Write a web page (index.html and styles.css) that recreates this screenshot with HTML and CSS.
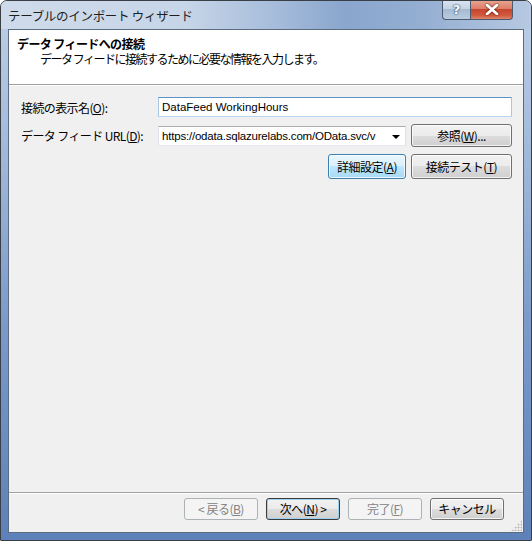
FILE: index.html
```html
<!DOCTYPE html>
<html lang="ja">
<head>
<meta charset="utf-8">
<title>テーブルのインポート ウィザード</title>
<link rel="stylesheet" href="styles.css">
</head>
<body>
<div class="window">
  <div class="titlebar">
    <span class="title">テーブルのインポート ウィザード</span>
    <div class="caption-btns">
      <div class="cb help"><span>?</span></div>
      <div class="cb close">
        <svg width="14" height="11" viewBox="0 0 14 11"><path d="M2 1 L12 10 M12 1 L2 10" stroke="#fff" stroke-width="2.6" stroke-linecap="round"/><path d="M2 1 L12 10 M12 1 L2 10" stroke="#fff" stroke-width="1.8" stroke-linecap="round"/></svg>
      </div>
    </div>
  </div>
  <div class="client">
    <div class="header">
      <div class="h-title">データ フィードへの接続</div>
      <div class="h-sub">データ フィードに接続するために必要な情報を入力します。</div>
    </div>
    <div class="content">
      <div class="row row1">
        <label class="lbl">接続の表示名(<u>O</u>):</label>
        <div class="input focus">DataFeed WorkingHours</div>
      </div>
      <div class="row row2">
        <label class="lbl">データ フィード URL(<u>D</u>):</label>
        <div class="combo"><span class="combo-text">https://odata.sqlazurelabs.com/OData.svc/v</span><span class="arrow"></span></div>
        <button class="btn wide">参照(<u>W</u>)...</button>
      </div>
      <div class="row row3">
        <button class="btn hot adv">詳細設定(<u>A</u>)</button>
        <button class="btn wide">接続テスト(<u>T</u>)</button>
      </div>
    </div>
    <div class="footer">
      <button class="btn nav disabled">&lt; 戻る(<u>B</u>)</button>
      <button class="btn nav default">次へ(<u>N</u>) &gt;</button>
      <button class="btn nav disabled">完了(<u>F</u>)</button>
      <button class="btn nav">キャンセル</button>
      <div class="grip"></div>
    </div>
  </div>
</div>
</body>
</html>
```

FILE: styles.css
```css
* { box-sizing: border-box; }
html, body { margin: 0; padding: 0; }
body {
  width: 532px;
  height: 541px;
  background: #ffffff;
  font-family: "Noto Sans CJK JP", "Liberation Sans", sans-serif;
  font-size: 12px;
  color: #000;
}
.window {
  width: 532px;
  height: 541px;
  border: 1px solid #3a3f46;
  border-radius: 7px 7px 1px 1px;
  background: linear-gradient(to bottom, #c3d4e9 0%, #b9cce5 5%, #9fb7d8 30%, #7b9aca 60%, #5d81b8 100%);
  display: flex;
  flex-direction: column;
  padding: 0 7px 7px 7px;
  position: relative;
  overflow: hidden;
}
.titlebar {
  height: 28px;
  display: flex;
  align-items: flex-start;
  justify-content: space-between;
  margin: 0 -7px;
  padding: 0 18px 0 7px;
  background: linear-gradient(to right, #cfdbea 0%, #c6d5e8 35%, #a9bfdc 50%, #8aa6cd 65%, #95afd3 80%, #b7c9e1 100%);
}
.title {
  margin-top: 5px;
  font-size: 12.5px;
  color: #1e1e1e;
  letter-spacing: -0.3px;
}
.caption-btns {
  display: flex;
  height: 20px;
  margin-top: -1px;
}
.cb {
  height: 20px;
  border: 1px solid #4c5a6e;
  border-top: none;
  display: flex;
  align-items: center;
  justify-content: center;
}
.help {
  width: 28px;
  border-radius: 0 0 0 4px;
  border-right: none;
  background: linear-gradient(to bottom, #dbe5f1 0%, #c4d3e5 45%, #a6bad3 50%, #b8cbe0 100%);
}
.help span {
  font-family: "DejaVu Sans", sans-serif;
  font-weight: bold;
  font-size: 13px;
  color: #fff;
  text-shadow: 0 0 2px #233a5a, 0 0 1px #233a5a;
}
.close {
  width: 43px;
  border-radius: 0 0 4px 0;
  background: linear-gradient(to bottom, #e9a793 0%, #dc7f69 45%, #c7462f 50%, #d1583d 80%, #e0866b 100%);
}
.close svg { filter: drop-shadow(0 0 1px #4d1206); }
.client {
  flex: 1;
  background: #f0f0f0;
  border: 1px solid #5b6b80;
  display: flex;
  flex-direction: column;
}
.header {
  height: 55px;
  background: #fff;
  border-bottom: 1px solid #a0a0a0;
  box-shadow: 0 1px 0 #ffffff;
  padding: 6px 0 0 8px;
}
.h-title {
  font-weight: bold;
  font-size: 12px;
  line-height: 15px;
  letter-spacing: -0.6px;
}
.h-sub {
  padding-left: 23px;
  font-size: 12px;
  line-height: 15px;
  letter-spacing: -1.5px;
}
.content {
  flex: 1;
  padding: 12px 11px 0 12px;
  display: flex;
  flex-direction: column;
  gap: 7px;
}
.row {
  display: flex;
  align-items: center;
}
.lbl {
  width: 137px;
  font-size: 12px;
  letter-spacing: -0.6px;
}
.lbl u, .btn u { text-decoration: underline; text-underline-offset: 1px; }
.input {
  flex: 1;
  height: 20px;
  border: 1px solid #abadb3;
  border-color: #abadb3 #dbdfe6 #e3e9ef #e2e3ea;
  background: #fff;
  padding: 0 3px;
  font-family: "Liberation Sans", sans-serif;
  font-size: 11.5px;
  line-height: 18px;
  white-space: nowrap;
}
.input.focus {
  border-color: #5d93c4 #a7c8e5 #b8d6f0 #a7c8e5;
}
.combo {
  width: 248px;
  height: 20px;
  border: 1px solid #abadb3;
  border-color: #abadb3 #dbdfe6 #e3e9ef #e2e3ea;
  background: #fff;
  display: flex;
  align-items: center;
  justify-content: space-between;
  padding: 0 5px 0 3px;
  font-family: "Liberation Sans", sans-serif;
  font-size: 11.5px;
  white-space: nowrap;
  overflow: hidden;
}
.combo-text { letter-spacing: -0.2px; }
.arrow {
  width: 0; height: 0;
  border-left: 4px solid transparent;
  border-right: 4px solid transparent;
  border-top: 4px solid #000;
  margin-top: 2px;
  flex: none;
  margin-left: 4px;
}
.btn {
  font-family: "Noto Sans CJK JP", sans-serif;
  font-size: 12px;
  letter-spacing: -0.5px;
  color: #000;
  border: 1px solid #707070;
  border-radius: 3px;
  background: linear-gradient(to bottom, #f2f2f2 0%, #ebebeb 50%, #dddddd 50%, #cfcfcf 100%);
  box-shadow: inset 0 0 0 1px rgba(255,255,255,0.75);
  padding: 0;
  display: flex;
  align-items: center;
  justify-content: center;
  line-height: 1;
}
.wide { width: 101px; height: 23px; margin-left: 5px; }
.row3 { justify-content: flex-end; }
.row3 .btn { height: 25px; }
.adv { width: 78px; }
.hot {
  border-color: #3c7fb1;
  background: linear-gradient(to bottom, #eaf6fd 0%, #d9f0fc 50%, #bee6fd 50%, #a7d9f5 100%);
}
.footer {
  height: 40px;
  border-top: 1px solid #a0a0a0;
  box-shadow: inset 0 1px 0 #ffffff;
  display: flex;
  align-items: flex-start;
  justify-content: flex-end;
  gap: 8px;
  padding: 5px 19px 0 0;
  position: relative;
}
.nav { width: 74px; height: 22px; }
.default {
  border-color: #3c3c3c;
  box-shadow: inset 0 0 0 1px #9cd2f0;
}
.disabled {
  border-color: #adb2b5;
  background: #f4f4f4;
  color: #838383;
  box-shadow: none;
}
.grip {
  position: absolute;
  right: 1px;
  bottom: 1px;
  width: 11px;
  height: 11px;
  background: radial-gradient(circle, #b8b8b8 0.8px, transparent 1.2px) 0 0 / 3px 3px;
  clip-path: polygon(100% 0, 100% 100%, 0 100%);
}
```
